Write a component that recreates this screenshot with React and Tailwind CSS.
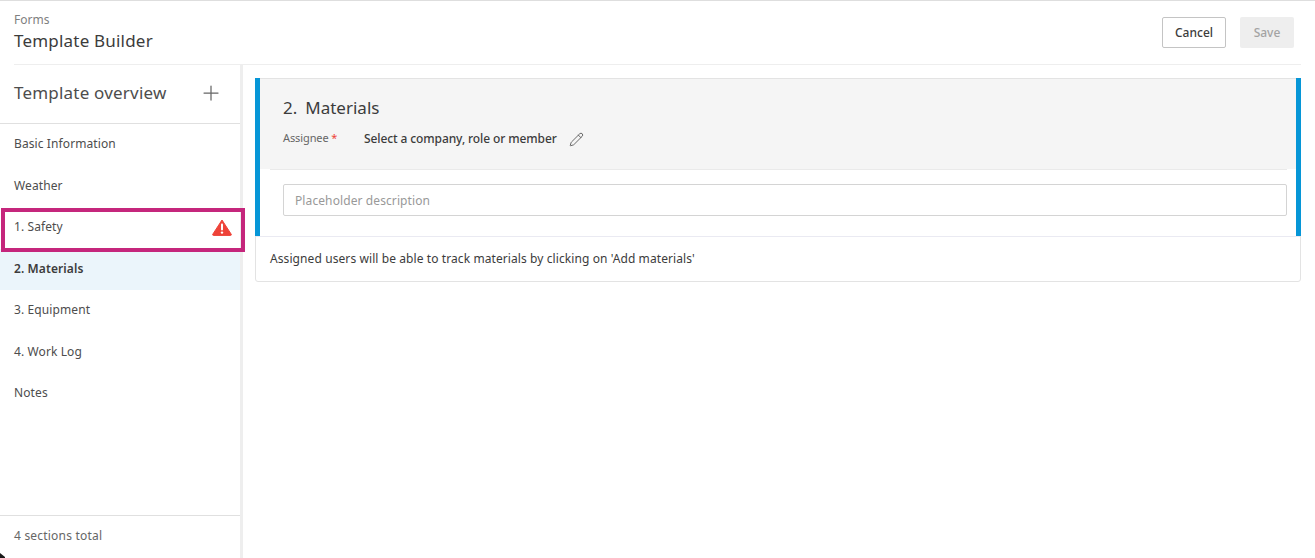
import { Plus, Pencil } from 'lucide-react';

const SECTIONS = [
  { label: 'Basic Information' },
  { label: 'Weather' },
  { label: '1. Safety', error: true },
  { label: '2. Materials', active: true },
  { label: '3. Equipment' },
  { label: '4. Work Log' },
  { label: 'Notes' },
];

function WarningIcon() {
  return (
    <svg width="20" height="17" viewBox="0 0 20 17">
      <path d="M10 1 L19.2 15.2 Q19.6 16.4 18.4 16.4 L1.6 16.4 Q0.4 16.4 0.8 15.2 Z" fill="#ee4339" stroke="#ee4339" strokeLinejoin="round" />
      <rect x="9" y="4.6" width="2" height="6.8" rx="0.8" fill="#fff" />
      <circle cx="10" cy="13.6" r="1.2" fill="#fff" />
    </svg>
  );
}

function SectionItem({ section }) {
  return (
    <div className={`relative flex h-[41.5px] items-center justify-between pb-px pl-3.5 pr-2 tracking-[0.1px] ${section.active ? 'bg-[#ebf5fb] font-semibold text-[#3c3c3c]' : 'text-[#4d4d4d]'}`}>
      <span>{section.label}</span>
      {section.error && (
        <>
          <WarningIcon />
          <div className="absolute left-px top-px z-10 h-[44px] w-[244px] border-4 border-[#c5267c]" />
        </>
      )}
    </div>
  );
}

export default function App() {
  return (
    <div className="relative flex h-[558px] flex-col overflow-hidden border-t border-[#dedede] bg-white font-['Noto_Sans',sans-serif] text-[12px] text-[#3c3c3c]">
      <header className="mx-3.5 flex h-[64px] shrink-0 items-center justify-between border-b border-[#eeeeee]">
        <div className="pb-[2px] pt-px">
          <div className="text-[12px] leading-[17px] text-[#808080]">Forms</div>
          <h1 className="mt-px text-[17px] leading-[24px] tracking-[0.2px] text-[#3c3c3c]">Template Builder</h1>
        </div>
        <div className="flex gap-3.5 pr-[7px]">
          <button className="h-[31px] w-[64px] rounded-[2px] border-[1.5px] border-[#c4c4c4] bg-white font-medium text-[#3c3c3c]">Cancel</button>
          <button className="h-[31px] w-[54px] rounded-[2px] bg-[#eeeeee] font-medium text-[#a3a3a3]">Save</button>
        </div>
      </header>
      <div className="flex min-h-0 flex-1">
        <aside className="flex w-[243px] shrink-0 flex-col border-r-[3px] border-[#eeeeee]">
          <div className="flex h-[59px] shrink-0 items-center justify-between border-b border-[#e0e0e0] pb-[2px] pl-3.5 pr-[17px]">
            <h2 className="text-[17px] tracking-[0.2px] text-[#4d4d4d]">Template overview</h2>
            <Plus size={24} strokeWidth={1.25} className="text-[#666666]" />
          </div>
          <nav className="flex-1">
            {SECTIONS.map((s) => (
              <SectionItem key={s.label} section={s} />
            ))}
          </nav>
          <div className="flex h-[43px] shrink-0 items-center border-t border-[#e0e0e0] pb-[3px] pl-3.5 tracking-[0.2px] text-[#666666]">
            4 sections total
          </div>
        </aside>
        <main className="flex-1 pl-3 pr-3.5 pt-[13px]">
          <div className="rounded-b-[3px] border border-[#e3e3e3]">
            <div className="-mx-px -mt-px border-x-[5px] border-[#0696d7]">
              <div className="border-t border-[#e3e3e3] bg-[#f5f5f5] pb-[21px] pl-[23px] pr-[22px] pt-[17px]">
                <h3 className="text-[17px] leading-[24px] text-[#3c3c3c]">
                  <span className="mr-[8px]">2.</span>Materials
                </h3>
                <div className="mt-[10px] flex items-center">
                  <span className="w-[81px] pb-px text-[11px] tracking-[-0.1px] text-[#666666]">
                    Assignee <span className="text-[#ee4339]">*</span>
                  </span>
                  <span className="font-medium tracking-[-0.1px] text-[#3c3c3c]">Select a company, role or member</span>
                  <Pencil size={15} strokeWidth={1.4} className="ml-[12px] text-[#555555]" />
                </div>
              </div>
              <div className="ml-[10px] mr-[9px] h-px bg-[#eaeaea]" />
              <div className="bg-white pb-[20px] pl-[23px] pr-[9px] pt-[14px]">
                <input
                  className="h-[32px] w-full rounded-[2px] border-[1.5px] border-[#d4d4d4] px-[11px] text-[12px] tracking-[0.1px] placeholder:text-[#999999]"
                  placeholder="Placeholder description"
                />
              </div>
            </div>
            <div className="flex h-[45px] items-center border-t border-[#eaeaf2] px-[14px] tracking-[0.09px] text-[#3c3c3c]">
              Assigned users will be able to track materials by clicking on 'Add materials'
            </div>
          </div>
        </main>
      </div>
      <svg className="absolute bottom-0 left-0" width="5" height="5" viewBox="0 0 5 5">
        <path d="M0 0 L5 4 L5 5 L0 5 Z" fill="#1a1a1a" />
      </svg>
    </div>
  );
}
